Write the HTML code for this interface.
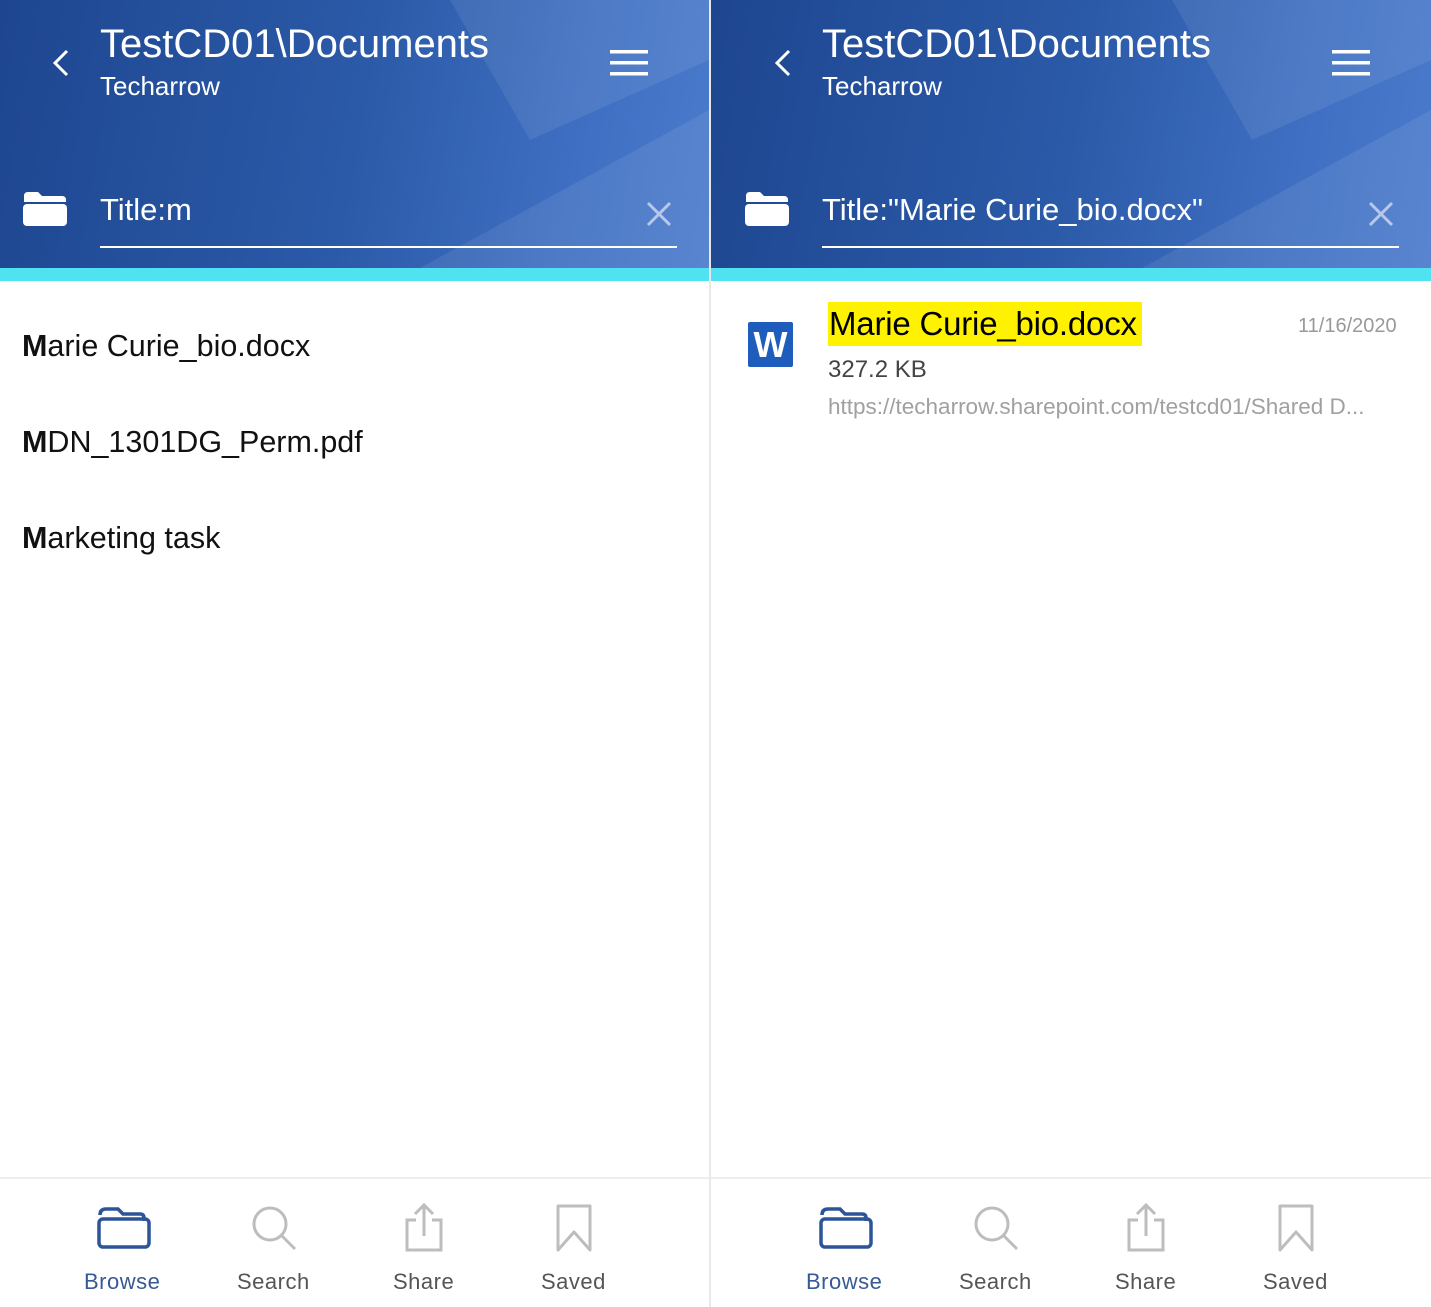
<!DOCTYPE html>
<html><head><meta charset="utf-8"><style>
*{margin:0;padding:0;box-sizing:border-box}
body{width:1431px;height:1307px;position:relative;background:#fff;font-family:"Liberation Sans",sans-serif;overflow:hidden}
.a{position:absolute;white-space:nowrap}
.hdr{position:absolute;top:0;height:268px;overflow:hidden;background:linear-gradient(100deg,#1e4690 0%,#2b5aa8 50%,#3f6fc2 80%,#4b7bcc 100%)}
.cy{position:absolute;top:268px;height:13px;background:#4fe3f2}
.t1{font-size:40px;color:#fff;top:22px}
.t2{font-size:26px;color:#fff;top:71px}
.q{font-size:31px;color:#fff;top:192px}
.ul{position:absolute;top:246px;height:2px;background:#fff;width:577px}
.li{font-size:30.5px;color:#111;left:22px}
.lab{font-size:22px;color:#555;top:1269px;letter-spacing:.5px}
</style></head><body>
<div class="hdr" style="left:0;width:709px">
<svg width="709" height="268" style="position:absolute;left:0;top:0"><polygon points="450,0 709,0 709,60 530,140" fill="#fff" opacity=".08"/><polygon points="709,110 709,268 420,268" fill="#fff" opacity=".08"/></svg>
</div>
<div class="hdr" style="left:711px;width:720px">
<svg width="720" height="268" style="position:absolute;left:0;top:0"><polygon points="461,0 720,0 720,60 541,140" fill="#fff" opacity=".08"/><polygon points="720,110 720,268 431,268" fill="#fff" opacity=".08"/></svg>
</div>
<div class="cy" style="left:0;width:709px"></div>
<div class="cy" style="left:711px;width:720px"></div>
<div style="position:absolute;left:709px;top:0;width:2px;height:1307px;background:#e8e8e8"></div>

<svg class="a" style="left:50px;top:48px" width="22" height="30"><polyline points="17,3 5,15 17,27" fill="none" stroke="#fff" stroke-width="3"/></svg>
<div class="a t1" style="left:100px">TestCD01\Documents</div>
<div class="a t2" style="left:100px">Techarrow</div>
<svg class="a" style="left:610px;top:50px" width="38" height="26"><rect y="0" width="38" height="3.5" fill="#fff"/><rect y="11" width="38" height="3.5" fill="#fff"/><rect y="22" width="38" height="3.5" fill="#fff"/></svg>
<svg class="a" style="left:22px;top:190px" width="46" height="38"><path d="M2 6 Q2 2 6 2 L16 2 L20 6 L40 6 Q44 6 44 10 L44 12 L2 12Z" fill="#fff"/><rect x="1" y="14" width="44" height="22" rx="4" fill="#fff"/></svg>
<div class="a q" style="left:100px">Title:m</div>
<svg class="a" style="left:646px;top:201px" width="26" height="26"><path d="M2 2L24 24M24 2L2 24" stroke="#b8c8ea" stroke-width="3"/></svg>
<div class="ul" style="left:100px"></div>

<svg class="a" style="left:772px;top:48px" width="22" height="30"><polyline points="17,3 5,15 17,27" fill="none" stroke="#fff" stroke-width="3"/></svg>
<div class="a t1" style="left:822px">TestCD01\Documents</div>
<div class="a t2" style="left:822px">Techarrow</div>
<svg class="a" style="left:1332px;top:50px" width="38" height="26"><rect y="0" width="38" height="3.5" fill="#fff"/><rect y="11" width="38" height="3.5" fill="#fff"/><rect y="22" width="38" height="3.5" fill="#fff"/></svg>
<svg class="a" style="left:744px;top:190px" width="46" height="38"><path d="M2 6 Q2 2 6 2 L16 2 L20 6 L40 6 Q44 6 44 10 L44 12 L2 12Z" fill="#fff"/><rect x="1" y="14" width="44" height="22" rx="4" fill="#fff"/></svg>
<div class="a q" style="left:822px">Title:"Marie Curie_bio.docx"</div>
<svg class="a" style="left:1368px;top:201px" width="26" height="26"><path d="M2 2L24 24M24 2L2 24" stroke="#b8c8ea" stroke-width="3"/></svg>
<div class="ul" style="left:822px"></div>

<div class="a li" style="top:329px"><b>M</b>arie Curie_bio.docx</div>
<div class="a li" style="top:425px"><b>M</b>DN_1301DG_Perm.pdf</div>
<div class="a li" style="top:521px"><b>M</b>arketing task</div>

<div class="a" style="left:748px;top:322px;width:45px;height:45px;background:#1f5dbd;border-radius:2px;color:#fff;font-size:36px;font-weight:bold;text-align:center;line-height:46px">W</div>
<div class="a" style="left:828px;top:302px;width:314px;height:44px;background:#fef200"></div>
<div class="a" style="left:829px;top:305px;font-size:33px;color:#000;letter-spacing:-0.2px">Marie Curie_bio.docx</div>
<div class="a" style="left:1298px;top:315px;font-size:20px;color:#999;width:103px;overflow:hidden">11/16/2020</div>
<div class="a" style="left:828px;top:356px;font-size:24px;color:#444">327.2 KB</div>
<div class="a" style="left:828px;top:394px;font-size:22.5px;color:#a0a0a0">https://techarrow.sharepoint.com/testcd01/Shared D...</div>

<div style="position:absolute;left:0;top:1177px;width:709px;height:2px;background:#eee"></div>
<div style="position:absolute;left:711px;top:1177px;width:720px;height:2px;background:#eee"></div>

<svg class="a" style="left:96px;top:1205px" width="56" height="46"><path d="M4 10 Q4 4 10 4 L22 4 L27 9 L44 9 Q48 9 48 13 L48 16" fill="none" stroke="#2c5599" stroke-width="3.5"/><rect x="3" y="14" width="50" height="28" rx="4" fill="none" stroke="#2c5599" stroke-width="3.5"/></svg>
<div class="a lab" style="left:84px;color:#385a94">Browse</div>
<svg class="a" style="left:250px;top:1204px" width="48" height="48"><circle cx="20" cy="20" r="16" fill="none" stroke="#bdbdbd" stroke-width="3"/><path d="M32 32L45 45" stroke="#bdbdbd" stroke-width="3"/></svg>
<div class="a lab" style="left:237px">Search</div>
<svg class="a" style="left:402px;top:1202px" width="44" height="52"><path d="M14 18 L5 18 L5 48 L39 48 L39 18 L30 18" fill="none" stroke="#bdbdbd" stroke-width="3"/><path d="M22 34 L22 3 M13 12 L22 3 L31 12" fill="none" stroke="#bdbdbd" stroke-width="3"/></svg>
<div class="a lab" style="left:393px">Share</div>
<svg class="a" style="left:554px;top:1202px" width="40" height="52"><path d="M4 4 L36 4 L36 48 L20 30 L4 48Z" fill="none" stroke="#bdbdbd" stroke-width="3" stroke-linejoin="round"/></svg>
<div class="a lab" style="left:541px">Saved</div>

<svg class="a" style="left:818px;top:1205px" width="56" height="46"><path d="M4 10 Q4 4 10 4 L22 4 L27 9 L44 9 Q48 9 48 13 L48 16" fill="none" stroke="#2c5599" stroke-width="3.5"/><rect x="3" y="14" width="50" height="28" rx="4" fill="none" stroke="#2c5599" stroke-width="3.5"/></svg>
<div class="a lab" style="left:806px;color:#385a94">Browse</div>
<svg class="a" style="left:972px;top:1204px" width="48" height="48"><circle cx="20" cy="20" r="16" fill="none" stroke="#bdbdbd" stroke-width="3"/><path d="M32 32L45 45" stroke="#bdbdbd" stroke-width="3"/></svg>
<div class="a lab" style="left:959px">Search</div>
<svg class="a" style="left:1124px;top:1202px" width="44" height="52"><path d="M14 18 L5 18 L5 48 L39 48 L39 18 L30 18" fill="none" stroke="#bdbdbd" stroke-width="3"/><path d="M22 34 L22 3 M13 12 L22 3 L31 12" fill="none" stroke="#bdbdbd" stroke-width="3"/></svg>
<div class="a lab" style="left:1115px">Share</div>
<svg class="a" style="left:1276px;top:1202px" width="40" height="52"><path d="M4 4 L36 4 L36 48 L20 30 L4 48Z" fill="none" stroke="#bdbdbd" stroke-width="3" stroke-linejoin="round"/></svg>
<div class="a lab" style="left:1263px">Saved</div>
</body></html>
